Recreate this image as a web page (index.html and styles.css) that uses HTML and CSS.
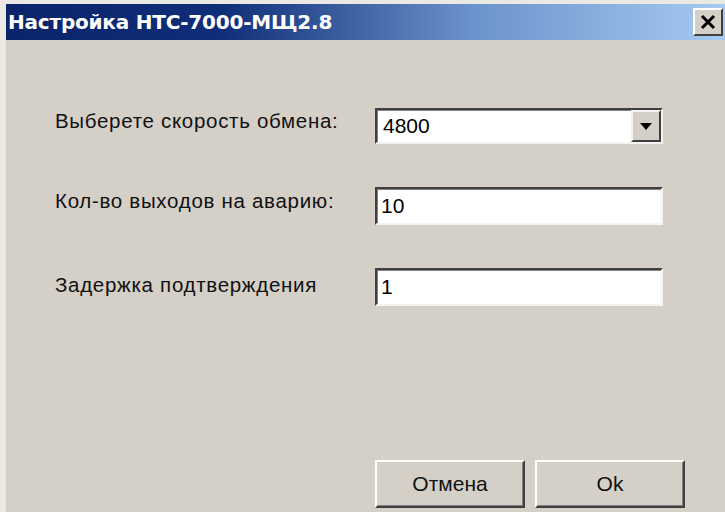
FILE: index.html
```html
<!DOCTYPE html>
<html lang="ru">
<head>
<meta charset="utf-8">
<title>Настройка НТС-7000-МЩ2.8</title>
<link rel="stylesheet" href="styles.css">
</head>
<body>
<div class="window">
  <div class="titlebar">
    <span class="title">Настройка НТС-7000-МЩ2.8</span>
    <button class="close" type="button" aria-label="Закрыть">
      <svg width="16" height="16" viewBox="0 0 16 16"><path d="M2 2 L14 14 M14 2 L2 14" stroke="#000" stroke-width="3" fill="none"/></svg>
    </button>
  </div>
  <div class="form">
    <div class="label">Выберете скорость обмена:</div>
    <div class="combo">
      <span class="value">4800</span>
      <span class="drop">
        <svg width="12" height="7" viewBox="0 0 12 7"><path d="M0 0 H12 L6 7 Z" fill="#000"/></svg>
      </span>
    </div>
    <div class="label">Кол-во выходов на аварию:</div>
    <div class="edit">10</div>
    <div class="label">Задержка подтверждения</div>
    <div class="edit">1</div>
  </div>
  <div class="footer">
    <button class="btn" type="button">Отмена</button>
    <button class="btn" type="button">Ok</button>
  </div>
</div>
</body>
</html>
```
FILE: styles.css
```css
html, body {
  margin: 0;
  padding: 0;
  background: #d4d0c8;
}

.window {
  width: 725px;
  height: 512px;
  box-sizing: border-box;
  border-left: 6px solid #ebe9e3;
  border-top: 4px solid #ebe9e3;
  background: #d4d0c8;
  display: flex;
  flex-direction: column;
  font-family: "Liberation Sans", Arial, sans-serif;
  color: #000;
}

.titlebar {
  height: 36px;
  display: flex;
  align-items: center;
  padding: 0 2px 0 2px;
  background: linear-gradient(to right, #0a246a 0%, #0f2e78 30%, #6b93cc 65%, #a6caf0 100%);
}

.title {
  color: #fff;
  font-family: "DejaVu Sans", "Liberation Sans", sans-serif;
  font-weight: bold;
  font-size: 20px;
  letter-spacing: -0.2px;
}

.close {
  margin-left: auto;
  width: 30px;
  height: 28px;
  padding: 0;
  background: #d4d0c8;
  border: 2px solid;
  border-color: #ffffff #404040 #404040 #ffffff;
  display: flex;
  align-items: center;
  justify-content: center;
}

.form {
  display: grid;
  grid-template-columns: 320px 288px;
  grid-template-rows: 36px 38px 38px;
  row-gap: 43px;
  padding: 68px 0 0 49px;
  align-items: center;
}

.label {
  font-size: 20.5px;
  letter-spacing: 0.7px;
  padding-bottom: 10px;
  color: #111;
}

.label:nth-child(5) {
  padding-bottom: 4px;
}

.combo, .edit {
  height: 100%;
  box-sizing: border-box;
  background: #fff;
  border: 2px solid;
  border-color: #404040 #f4f3ef #f4f3ef #404040;
  box-shadow: inset 1px 1px 0 #808080;
  display: flex;
  align-items: center;
  font-size: 21px;
}

.edit {
  padding-left: 4px;
}

.combo .value {
  padding-left: 6px;
  flex: 1;
}

.drop {
  width: 30px;
  height: 32px;
  box-sizing: border-box;
  background: #d4d0c8;
  border: 2px solid;
  border-color: #f4f3ef #404040 #404040 #f4f3ef;
  display: flex;
  align-items: center;
  justify-content: center;
}

.footer {
  margin-top: auto;
  display: flex;
  justify-content: flex-end;
  gap: 10px;
  padding: 0 40px 4px 0;
}

.btn {
  width: 150px;
  height: 48px;
  background: #d4d0c8;
  border: 2px solid;
  border-color: #ffffff #404040 #404040 #ffffff;
  box-shadow: inset -1px -1px 0 #808080;
  font-family: "Liberation Sans Narrow", "Liberation Sans", sans-serif;
  font-size: 21px;
  color: #111;
  padding: 0;
}
```
